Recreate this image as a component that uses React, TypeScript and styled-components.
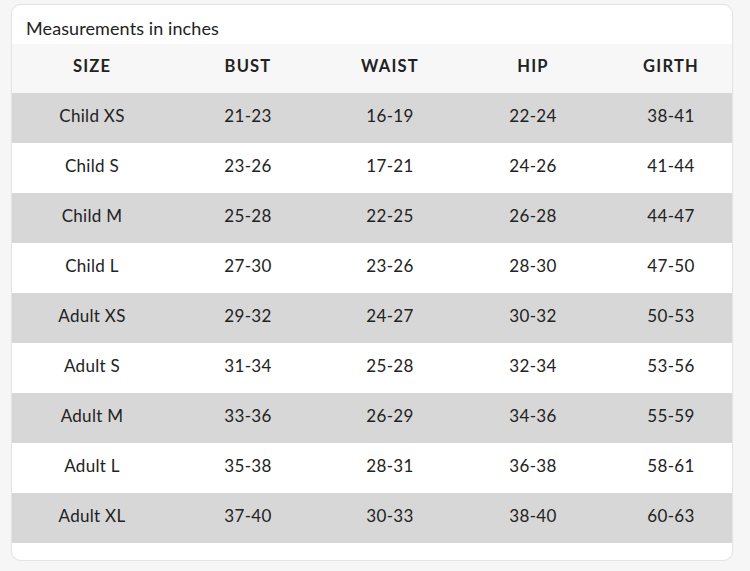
import React from "react";
import styled, { createGlobalStyle } from "styled-components";

const Global = createGlobalStyle`
  html, body { margin: 0; padding: 0; background: #f6f6f6; }
  body { font-family: "Lato", "Noto Sans", sans-serif; color: #222; }
`;

const Page = styled.div`
  padding: 4px 0 0 11px;
`;

const Card = styled.div`
  width: 722px;
  height: 557px;
  box-sizing: border-box;
  background: #fff;
  border: 1px solid #e4e4e4;
  border-radius: 10px;
  box-shadow: 0 0 2px rgba(0, 0, 0, 0.04);
  overflow: hidden;
  display: flex;
  flex-direction: column;
`;

const Title = styled.div`
  height: 39px;
  box-sizing: border-box;
  padding: 13px 0 0 14px;
  font-size: 18px;
  line-height: 20px;
  color: #222;
  letter-spacing: 0.1px;
`;

const Row = styled.div<{ $bg: string; $h: number }>`
  display: grid;
  grid-template-columns: 160px 152px 132px 154px 1fr;
  height: ${(p) => p.$h}px;
  box-sizing: border-box;
  padding-bottom: 5px;
  background: ${(p) => p.$bg};
  align-items: center;
`;

const HeadCell = styled.div`
  text-align: center;
  font-weight: 700;
  font-size: 16.5px;
  letter-spacing: 1.2px;
  color: #222;
`;

const Cell = styled.div`
  text-align: center;
  font-size: 17px;
  color: #222;
  letter-spacing: 0.3px;
`;

const headers = ["SIZE", "BUST", "WAIST", "HIP", "GIRTH"];
const rows = [
  ["Child XS", "21-23", "16-19", "22-24", "38-41"],
  ["Child S", "23-26", "17-21", "24-26", "41-44"],
  ["Child M", "25-28", "22-25", "26-28", "44-47"],
  ["Child L", "27-30", "23-26", "28-30", "47-50"],
  ["Adult XS", "29-32", "24-27", "30-32", "50-53"],
  ["Adult S", "31-34", "25-28", "32-34", "53-56"],
  ["Adult M", "33-36", "26-29", "34-36", "55-59"],
  ["Adult L", "35-38", "28-31", "36-38", "58-61"],
  ["Adult XL", "37-40", "30-33", "38-40", "60-63"],
];

export default function App() {
  return (
    <>
      <Global />
      <Page>
        <Card>
          <Title>Measurements in inches</Title>
          <Row $bg="#f7f7f7" $h={49}>
            {headers.map((h) => (
              <HeadCell key={h}>{h}</HeadCell>
            ))}
          </Row>
          {rows.map((r, i) => (
            <Row key={r[0]} $h={50} $bg={i % 2 === 0 ? "#d7d7d7" : "#ffffff"}>
              {r.map((c, j) => (
                <Cell key={j}>{c}</Cell>
              ))}
            </Row>
          ))}
        </Card>
      </Page>
    </>
  );
}
